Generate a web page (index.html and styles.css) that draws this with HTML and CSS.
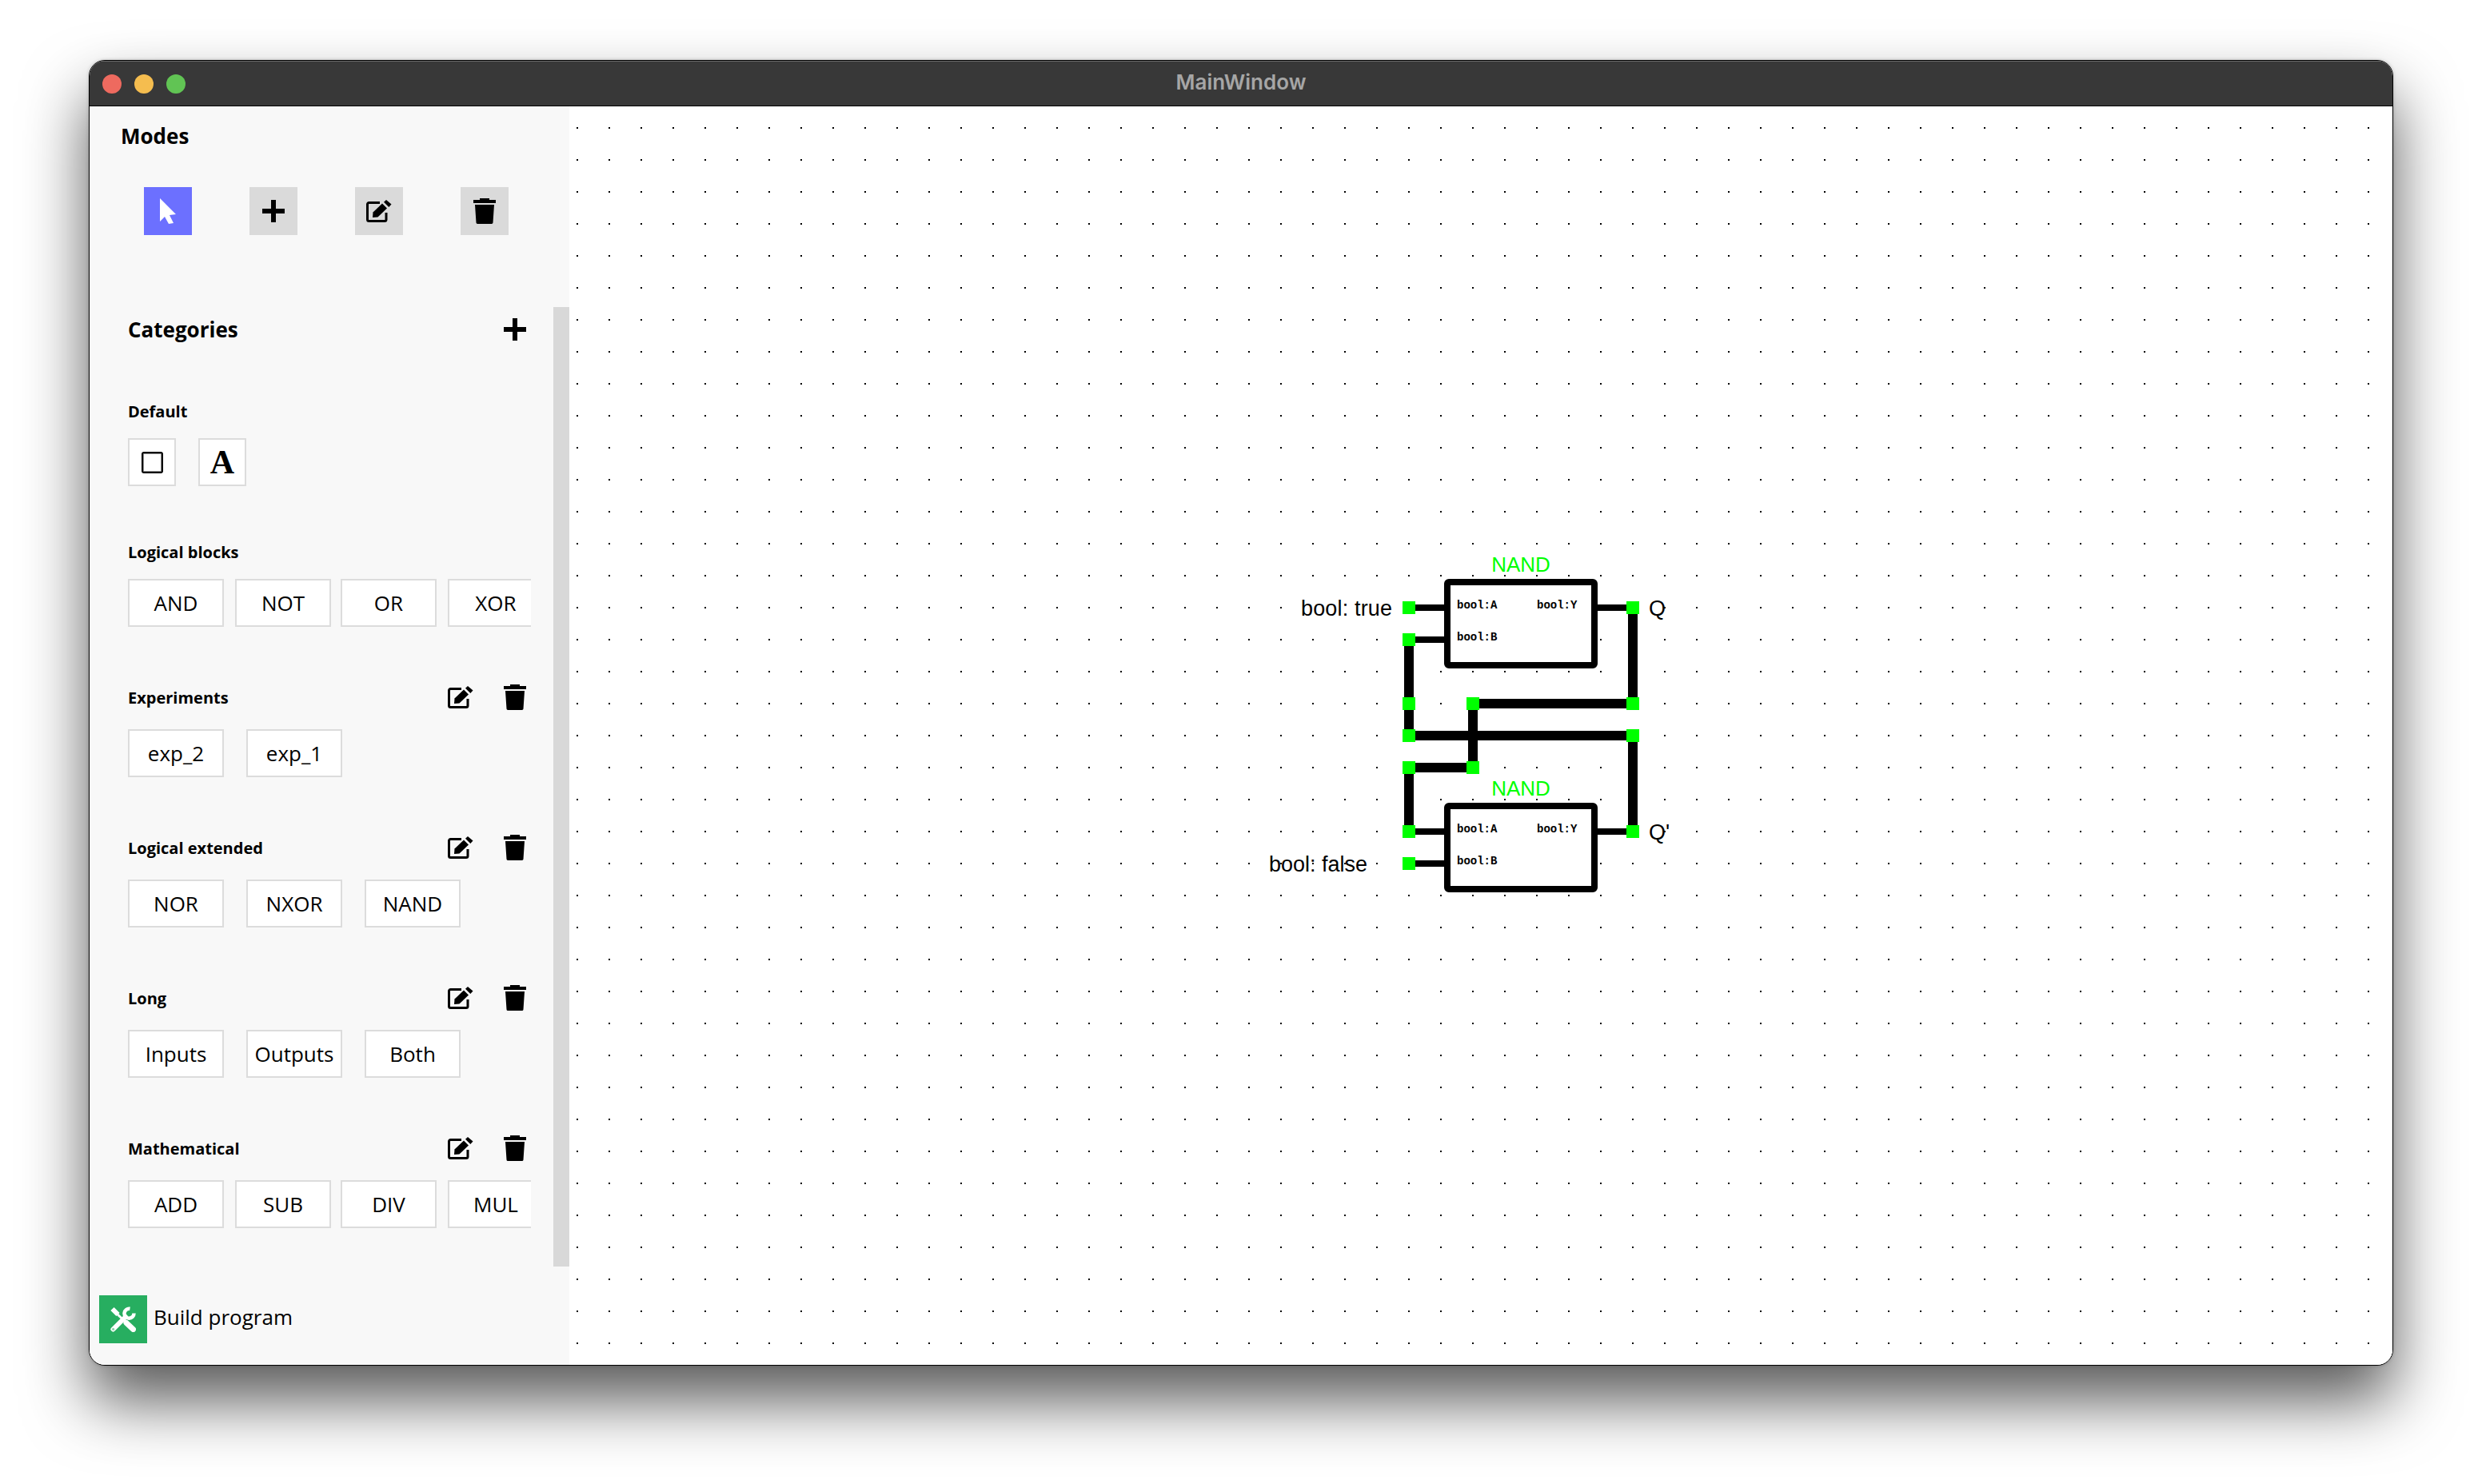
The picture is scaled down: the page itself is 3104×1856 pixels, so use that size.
FILE: index.html
```html
<!DOCTYPE html>
<html>
<head>
    <title>MainWindow</title>
    <link rel="stylesheet" href="styles.css">
</head>
<body>
    <svg class="icon-defs" width="0" height="0">
        <symbol id="i-plus" viewBox="0 0 28 28">
            <path d="M11 0h6v11h11v6H17v11h-6V17H0v-6h11z"/>
        </symbol>
        <symbol id="i-edit" viewBox="0 0 32 28">
            <path class="edit-frame" d="M17 3.5H3.5a2 2 0 0 0-2 2v19a2 2 0 0 0 2 2H23a2 2 0 0 0 2-2V16"/>
            <path d="M8 22l.5-6.5L20 4.5l6 6L14.5 21.5z"/>
            <path d="M22 2.8L25 0l6.5 5.5L28.3 9z"/>
        </symbol>
        <symbol id="i-trash" viewBox="0 0 28 32">
            <path d="M8 0h12v2h8v4H0V2h8z"/>
            <path d="M2 8h24l-1.5 22.5a1.6 1.6 0 0 1-1.6 1.5H5.1a1.6 1.6 0 0 1-1.6-1.5z"/>
        </symbol>
    </svg>

    <div class="window">
        <div class="titlebar">
            <span class="light light-red"></span>
            <span class="light light-yellow"></span>
            <span class="light light-green"></span>
            <span class="window-title">MainWindow</span>
        </div>

        <div class="window-body">
            <div class="sidebar">
                <div class="modes">
                    <div class="modes-title">Modes</div>
                    <div class="modes-row">
                        <div class="mode-btn mode-active">
                            <svg class="ico-cursor" viewBox="0 0 20 32"><path d="M0 0l20 20-8 1 5 10-6 1-5-9-6 6z"/></svg>
                        </div>
                        <div class="mode-btn"><svg class="ico-28"><use href="#i-plus"/></svg></div>
                        <div class="mode-btn"><svg class="ico-edit"><use href="#i-edit"/></svg></div>
                        <div class="mode-btn"><svg class="ico-trash"><use href="#i-trash"/></svg></div>
                    </div>
                </div>

                <div class="scroll-area">
                    <div class="categories">
                        <div class="categories-head">
                            <span class="categories-title">Categories</span>
                            <svg class="ico-28 categories-add"><use href="#i-plus"/></svg>
                        </div>

                        <div class="cat cat-first">
                            <div class="cat-head"><span class="cat-name">Default</span></div>
                            <div class="btn-row">
                                <div class="block-btn icon-btn">
                                    <svg class="ico-square" viewBox="0 0 27 27">
                                        <rect class="square-inner" x="2.5" y="2.5" width="22" height="22"/>
                                        <rect class="square-outer" x="1" y="1" width="25" height="25" rx="2"/>
                                    </svg>
                                </div>
                                <div class="block-btn icon-btn glyph-a">A</div>
                            </div>
                        </div>

                        <div class="cat">
                            <div class="cat-head"><span class="cat-name">Logical blocks</span></div>
                            <div class="btn-row btn-row-tight">
                                <div class="block-btn">AND</div>
                                <div class="block-btn">NOT</div>
                                <div class="block-btn">OR</div>
                                <div class="block-btn">XOR</div>
                            </div>
                        </div>

                        <div class="cat cat-tools">
                            <div class="cat-head">
                                <span class="cat-name">Experiments</span>
                                <span class="cat-actions">
                                    <svg class="ico-edit"><use href="#i-edit"/></svg>
                                    <svg class="ico-trash"><use href="#i-trash"/></svg>
                                </span>
                            </div>
                            <div class="btn-row">
                                <div class="block-btn">exp_2</div>
                                <div class="block-btn">exp_1</div>
                            </div>
                        </div>

                        <div class="cat cat-tools">
                            <div class="cat-head">
                                <span class="cat-name">Logical extended</span>
                                <span class="cat-actions">
                                    <svg class="ico-edit"><use href="#i-edit"/></svg>
                                    <svg class="ico-trash"><use href="#i-trash"/></svg>
                                </span>
                            </div>
                            <div class="btn-row">
                                <div class="block-btn">NOR</div>
                                <div class="block-btn">NXOR</div>
                                <div class="block-btn">NAND</div>
                            </div>
                        </div>

                        <div class="cat cat-tools">
                            <div class="cat-head">
                                <span class="cat-name">Long</span>
                                <span class="cat-actions">
                                    <svg class="ico-edit"><use href="#i-edit"/></svg>
                                    <svg class="ico-trash"><use href="#i-trash"/></svg>
                                </span>
                            </div>
                            <div class="btn-row">
                                <div class="block-btn">Inputs</div>
                                <div class="block-btn">Outputs</div>
                                <div class="block-btn">Both</div>
                            </div>
                        </div>

                        <div class="cat cat-tools">
                            <div class="cat-head">
                                <span class="cat-name">Mathematical</span>
                                <span class="cat-actions">
                                    <svg class="ico-edit"><use href="#i-edit"/></svg>
                                    <svg class="ico-trash"><use href="#i-trash"/></svg>
                                </span>
                            </div>
                            <div class="btn-row btn-row-tight">
                                <div class="block-btn">ADD</div>
                                <div class="block-btn">SUB</div>
                                <div class="block-btn">DIV</div>
                                <div class="block-btn">MUL</div>
                            </div>
                        </div>
                    </div>
                    <div class="scroll-thumb"></div>
                </div>

                <div class="build-row">
                    <div class="build-btn">
                        <svg class="ico-tools" viewBox="0 0 32 32">
                            <path class="tool-thin" d="M8 9l14 13"/>
                            <path class="tool-blade" d="M2.5 3l7 7"/>
                            <path class="tool-handle" d="M20 20.5l8.5 8"/>
                            <path class="tool-shaft" d="M3.5 28.5L19 13"/>
                            <path class="tool-jaw" d="M24.5 2.8A6 6 0 1 0 29.5 8.5"/>
                            <circle class="tool-hole" cx="3.6" cy="28.4" r="1.6"/>
                        </svg>
                    </div>
                    <span class="build-label">Build program</span>
                </div>
            </div>

            <div class="canvas">
                <!-- the diagram uses page coordinates, the viewBox starts where the canvas starts -->
                <svg class="board" viewBox="712 133 2280 1574">
                    <defs>
                        <pattern id="grid-dots" patternUnits="userSpaceOnUse" x="0" y="20" width="40" height="40">
                            <rect x="1" y="19" width="2" height="2" fill="#000"/>
                        </pattern>
                    </defs>
                    <rect x="712" y="133" width="2280" height="1574" fill="url(#grid-dots)"/>

                    <rect class="label-bg" x="1625" y="745" width="129" height="30"/>

                    <g class="wires">
                        <path d="M1762 800V920M1762 960V1040M1842 880V960M2042 760V880M2042 920V1040"/>
                        <path d="M1842 880H2042M1762 920H2042M1762 960H1842"/>
                    </g>
                    <g class="wires-thin">
                        <path d="M1770 760H1806M1770 800H1806M1998 760H2034"/>
                        <path d="M1770 1040H1806M1770 1080H1806M1998 1040H2034"/>
                    </g>

                    <rect class="gate" x="1810" y="728" width="184" height="104" rx="2"/>
                    <rect class="gate" x="1810" y="1008" width="184" height="104" rx="2"/>

                    <g class="ports">
                        <rect x="1754" y="752" width="16" height="16"/>
                        <rect x="1754" y="792" width="16" height="16"/>
                        <rect x="1754" y="872" width="16" height="16"/>
                        <rect x="1754" y="912" width="16" height="16"/>
                        <rect x="1754" y="952" width="16" height="16"/>
                        <rect x="1754" y="1032" width="16" height="16"/>
                        <rect x="1754" y="1072" width="16" height="16"/>
                        <rect x="1834" y="872" width="16" height="16"/>
                        <rect x="1834" y="952" width="16" height="16"/>
                        <rect x="2034" y="752" width="16" height="16"/>
                        <rect x="2034" y="872" width="16" height="16"/>
                        <rect x="2034" y="912" width="16" height="16"/>
                        <rect x="2034" y="1032" width="16" height="16"/>
                    </g>

                    <text class="gate-name" x="1902" y="715">NAND</text>
                    <text class="gate-name" x="1902" y="995">NAND</text>

                    <text class="pin" x="1822" y="761">bool:A</text>
                    <text class="pin" x="1822" y="801">bool:B</text>
                    <text class="pin" x="1922" y="761">bool:Y</text>
                    <text class="pin" x="1822" y="1041">bool:A</text>
                    <text class="pin" x="1822" y="1081">bool:B</text>
                    <text class="pin" x="1922" y="1041">bool:Y</text>

                    <text class="node-label" x="1627" y="770" textLength="114">bool: true</text>
                    <text class="node-label" x="1587" y="1090">bool: false</text>
                    <text class="node-label" x="2062" y="770">Q</text>
                    <text class="node-label" x="2062" y="1050">Q'</text>
                </svg>
            </div>
        </div>
    </div>
</body>
</html>
```

FILE: styles.css
```css
html, body {
    margin: 0;
    height: 100%;
}
body {
    width: 3104px;
    height: 1856px;
    padding: 75px 111px 0;
    box-sizing: border-box;
    background-color: #fff;
    font-family: "Open Sans", sans-serif;
    color: #000;
    overflow: hidden;
}
.icon-defs {
    position: absolute;
}

/* window frame */
.window {
    width: 2882px;
    height: 1633px;
    box-sizing: border-box;
    display: flex;
    flex-direction: column;
    border: 1px solid #000;
    border-radius: 20px;
    overflow: hidden;
    background-color: #fff;
    box-shadow: 0 44px 80px rgba(0, 0, 0, 0.65), 0 0 4px rgba(0, 0, 0, 0.2);
}
.titlebar {
    height: 57px;
    flex-shrink: 0;
    box-sizing: border-box;
    display: flex;
    align-items: center;
    gap: 16px;
    padding-left: 16px;
    position: relative;
    background-color: #383838;
    border-top: 1px solid #6a6a6a;
    border-bottom: 1px solid #000;
}
.light {
    width: 24px;
    height: 24px;
    border-radius: 50%;
}
.light-red { background-color: #ee6a5f; }
.light-yellow { background-color: #f5bd4f; }
.light-green { background-color: #61c454; }
.window-title {
    position: absolute;
    left: 0;
    right: 0;
    top: 10px;
    text-align: center;
    font-family: Inter, sans-serif;
    font-size: 26px;
    font-weight: 600;
    color: #a6a6a6;
}
.window-body {
    flex: 1;
    display: flex;
    min-height: 0;
}

/* sidebar */
.sidebar {
    width: 600px;
    flex-shrink: 0;
    display: flex;
    flex-direction: column;
    background-color: #f8f8f8;
}
.modes {
    height: 251px;
    box-sizing: border-box;
    padding: 20px 0 0 39px;
}
.modes-title {
    font-size: 26px;
    font-weight: 700;
    line-height: 34px;
}
.modes-row {
    display: flex;
    gap: 72px;
    margin: 47px 0 0 29px;
}
.mode-btn {
    width: 60px;
    height: 60px;
    display: flex;
    align-items: center;
    justify-content: center;
    background-color: #dadada;
}
.mode-active {
    background-color: #6c70ff;
}
.ico-cursor {
    width: 20px;
    height: 32px;
    fill: #fff;
}
.ico-28 {
    width: 28px;
    height: 28px;
}
.ico-edit {
    width: 32px;
    height: 28px;
}
.ico-trash {
    width: 28px;
    height: 32px;
}
.edit-frame {
    fill: none;
    stroke: #000;
    stroke-width: 3;
}
.scroll-area {
    height: 1200px;
    flex-shrink: 0;
    display: flex;
    justify-content: space-between;
}
.categories {
    width: 498px;
    padding: 11px 0 0 48px;
}
.scroll-thumb {
    width: 20px;
    background-color: #d8d8d8;
}
.categories-head {
    height: 36px;
    display: flex;
    align-items: center;
    justify-content: space-between;
}
.categories-title {
    font-size: 26px;
    font-weight: 700;
    margin-bottom: 3px;
}
.categories-add {
    margin-bottom: 2px;
}
.cat {
    margin-top: 67px;
}
.cat-first {
    margin-top: 68px;
}
.cat-tools {
    margin-top: 73px;
}
.cat-head {
    height: 32px;
    display: flex;
    align-items: center;
    justify-content: space-between;
    margin-bottom: 17px;
}
.cat-tools .cat-head {
    margin-bottom: 23px;
}
.cat-name {
    font-size: 20px;
    font-weight: 700;
    margin-bottom: 2px;
}
.cat-actions {
    display: flex;
    align-items: center;
    gap: 38px;
    margin-bottom: 2px;
}
.btn-row {
    width: 504px;
    display: flex;
    gap: 28px;
    overflow: hidden;
}
.btn-row-tight {
    gap: 14px;
}
.btn-row-tight .block-btn:nth-child(3) {
    margin-left: -2px;
}
.block-btn {
    width: 120px;
    height: 60px;
    box-sizing: border-box;
    flex-shrink: 0;
    display: flex;
    align-items: center;
    justify-content: center;
    background-color: #fff;
    border: 2px solid #dcdcdc;
    font-size: 26px;
}
.icon-btn {
    width: 60px;
}
.glyph-a {
    font-family: "Liberation Serif", serif;
    font-size: 42px;
    font-weight: 700;
}
.ico-square {
    width: 27px;
    height: 27px;
}
.square-outer {
    fill: none;
    stroke: #000;
    stroke-width: 2;
}
.square-inner {
    fill: #fff;
    stroke: #8c8c8c;
    stroke-width: 1;
}
.build-row {
    display: flex;
    align-items: center;
    gap: 8px;
    margin: 36px 0 0 12px;
}
.build-btn {
    width: 60px;
    height: 60px;
    display: flex;
    align-items: center;
    justify-content: center;
    background-color: #27ae60;
}
.ico-tools {
    width: 32px;
    height: 32px;
    fill: none;
    stroke: #fff;
}
.tool-thin { stroke-width: 3; }
.tool-blade { stroke-width: 6; }
.tool-handle { stroke-width: 7; stroke-linecap: round; }
.tool-shaft { stroke-width: 6; stroke-linecap: round; }
.tool-jaw { stroke-width: 4.5; }
.tool-hole { fill: #8fd3ab; stroke: none; }
.build-label {
    font-size: 26px;
    margin-bottom: 6px;
}

/* canvas */
.canvas {
    flex: 1;
    min-width: 0;
    background-color: #fff;
}
.board {
    display: block;
    width: 2280px;
    height: 1574px;
    shape-rendering: crispEdges;
}
.label-bg {
    fill: #fff;
}
.wires path {
    fill: none;
    stroke: #000;
    stroke-width: 12;
}
.wires-thin path {
    fill: none;
    stroke: #000;
    stroke-width: 8;
}
.gate {
    fill: #fff;
    stroke: #000;
    stroke-width: 8;
    shape-rendering: geometricPrecision;
}
.ports rect {
    fill: #00ff00;
}
.gate-name {
    font-family: "Liberation Sans", sans-serif;
    font-size: 26px;
    fill: #00ff00;
    text-anchor: middle;
}
.pin {
    font-family: "Liberation Mono", monospace;
    font-size: 14px;
    font-weight: 700;
    fill: #000;
}
.node-label {
    font-family: "Liberation Sans", sans-serif;
    font-size: 27px;
    fill: #000;
}
```
